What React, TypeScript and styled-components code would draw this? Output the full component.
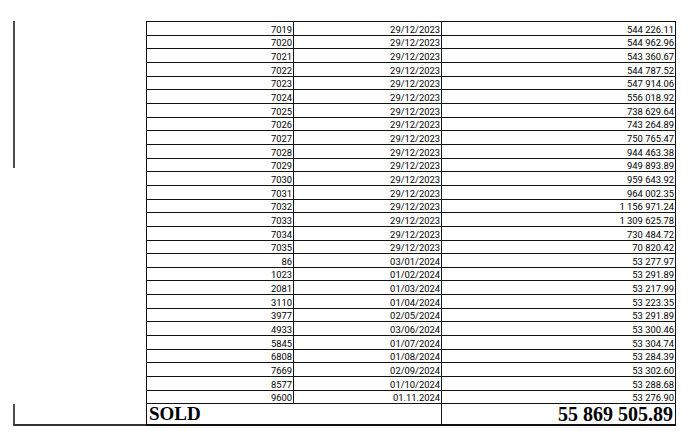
import styled, { createGlobalStyle } from "styled-components";

const GlobalStyle = createGlobalStyle`
  body {
    margin: 0;
    background: #ffffff;
    font-family: Roboto, "Liberation Sans", sans-serif;
  }
`;

const Page = styled.div`
  display: grid;
  grid-template-columns: 133px 529px;
  padding: 21px 0 0 13px;
`;

const Gutter = styled.div`
  display: flex;
  flex-direction: column;
  justify-content: space-between;
`;

const TopRule = styled.div`
  width: 2px;
  height: 147px;
  background: #4d4d4d;
`;

const BottomCorner = styled.div`
  height: 20px;
  border-left: 2px solid #4d4d4d;
  border-bottom: 2px solid #333;
`;

const Table = styled.table`
  border-collapse: collapse;
  table-layout: fixed;
  width: 529px;
  border: 1px solid #111;
  border-bottom: 2px solid #111;
`;

const Row = styled.tr`
  height: 13.67px;
`;

const Cell = styled.td`
  border: 1px solid #111;
  padding: 0 1px 0 0;
  text-align: right;
  vertical-align: bottom;
  font-size: 9.4px;
  line-height: 11px;
  color: #000;
  white-space: nowrap;
`;

const TotalRow = styled.tr`
  height: 21px;
`;

const TotalCell = styled.td<{ $align: "left" | "right"; $size: number }>`
  border: 1px solid #111;
  padding: 0 2px;
  text-align: ${(p) => p.$align};
  vertical-align: bottom;
  font-family: "Liberation Serif", "Times New Roman", serif;
  font-weight: bold;
  font-size: ${(p) => p.$size}px;
  line-height: 20px;
  color: #000;
`;

const rows: [string, string, string][] = [
  ["7019", "29/12/2023", "544 226.11"],
  ["7020", "29/12/2023", "544 962.96"],
  ["7021", "29/12/2023", "543 360.67"],
  ["7022", "29/12/2023", "544 787.52"],
  ["7023", "29/12/2023", "547 914.06"],
  ["7024", "29/12/2023", "556 018.92"],
  ["7025", "29/12/2023", "738 629.64"],
  ["7026", "29/12/2023", "743 264.89"],
  ["7027", "29/12/2023", "750 765.47"],
  ["7028", "29/12/2023", "944 463.38"],
  ["7029", "29/12/2023", "949 893.89"],
  ["7030", "29/12/2023", "959 643.92"],
  ["7031", "29/12/2023", "964 002.35"],
  ["7032", "29/12/2023", "1 156 971.24"],
  ["7033", "29/12/2023", "1 309 625.78"],
  ["7034", "29/12/2023", "730 484.72"],
  ["7035", "29/12/2023", "70 820.42"],
  ["86", "03/01/2024", "53 277.97"],
  ["1023", "01/02/2024", "53 291.89"],
  ["2081", "01/03/2024", "53 217.99"],
  ["3110", "01/04/2024", "53 223.35"],
  ["3977", "02/05/2024", "53 291.89"],
  ["4933", "03/06/2024", "53 300.46"],
  ["5845", "01/07/2024", "53 304.74"],
  ["6808", "01/08/2024", "53 284.39"],
  ["7669", "02/09/2024", "53 302.60"],
  ["8577", "01/10/2024", "53 288.68"],
  ["9600", "01.11.2024", "53 276.90"],
];

export default function App() {
  return (
    <>
      <GlobalStyle />
      <Page>
        <Gutter>
          <TopRule />
          <BottomCorner />
        </Gutter>
        <Table>
          <colgroup>
            <col style={{ width: 147 }} />
            <col style={{ width: 148 }} />
            <col style={{ width: 234 }} />
          </colgroup>
          <tbody>
            {rows.map(([no, date, sum]) => (
              <Row key={no}>
                <Cell>{no}</Cell>
                <Cell>{date}</Cell>
                <Cell>{sum}</Cell>
              </Row>
            ))}
            <TotalRow>
              <TotalCell colSpan={2} $align="left" $size={19}>
                SOLD
              </TotalCell>
              <TotalCell $align="right" $size={20}>
                55 869 505.89
              </TotalCell>
            </TotalRow>
          </tbody>
        </Table>
      </Page>
    </>
  );
}
